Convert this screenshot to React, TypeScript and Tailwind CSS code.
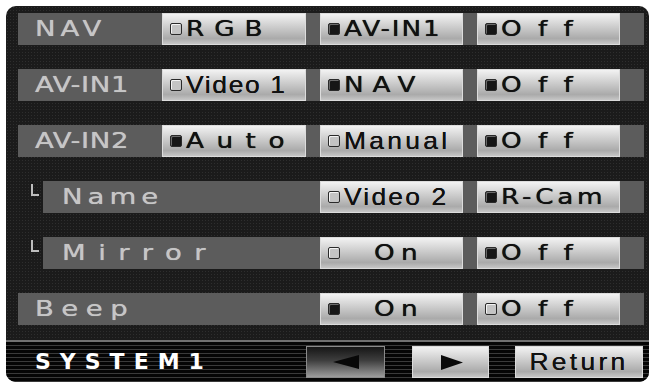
import React from 'react';

type Opt = { label: string; on: boolean; wide?: boolean; track: string; pad?: string };

type Row = {
  label: string;
  sub?: boolean;
  track: string;
  opts: (Opt | null)[];
};

const rows: Row[] = [
  {
    label: 'NAV',
    track: 'tracking-[4px]',
    opts: [
      { label: 'RGB', on: false, wide: true, track: 'tracking-[8px]' },
      { label: 'AV-IN1', on: true, wide: true, track: 'tracking-[1.5px]' },
      { label: 'Off', on: true, wide: true, track: 'tracking-[13px]' },
    ],
  },
  {
    label: 'AV-IN1',
    track: 'tracking-[0.5px]',
    opts: [
      { label: 'Video 1', on: false, track: 'tracking-[1.5px]' },
      { label: 'NAV', on: true, wide: true, track: 'tracking-[7px]' },
      { label: 'Off', on: true, wide: true, track: 'tracking-[13px]' },
    ],
  },
  {
    label: 'AV-IN2',
    track: 'tracking-[0.5px]',
    opts: [
      { label: 'Auto', on: true, wide: true, track: 'tracking-[10px]' },
      { label: 'Manual', on: false, track: 'tracking-[3px]' },
      { label: 'Off', on: true, wide: true, track: 'tracking-[13px]' },
    ],
  },
  {
    label: 'Name',
    sub: true,
    track: 'tracking-[4px]',
    opts: [
      null,
      { label: 'Video 2', on: false, track: 'tracking-[2px]' },
      { label: 'R-Cam', on: true, wide: true, track: 'tracking-[3px]' },
    ],
  },
  {
    label: 'Mirror',
    sub: true,
    track: 'tracking-[10px]',
    opts: [
      null,
      { label: 'On', on: false, wide: true, track: 'tracking-[5px]', pad: 'ml-[34px]' },
      { label: 'Off', on: true, wide: true, track: 'tracking-[13px]' },
    ],
  },
  {
    label: 'Beep',
    track: 'tracking-[6px]',
    opts: [
      null,
      { label: 'On', on: true, wide: true, track: 'tracking-[5px]', pad: 'ml-[34px]' },
      { label: 'Off', on: false, wide: true, track: 'tracking-[13px]' },
    ],
  },
];

const btnBg =
  'border border-[#dcdcdc] bg-[linear-gradient(to_bottom,#f2f2f2_0%,#d8d8d8_30%,#aaaaaa_82%,#c6c6c6_100%)]';

const Square = ({ on }: { on: boolean }) => (
  <span
    className={`w-[12px] h-[12px] shrink-0 border border-[#2a2a2a] rounded-[2px] ${
      on ? 'bg-[#161616] shadow-[inset_1px_1px_0_#6a6a6a]' : 'bg-[#c4c4c4] shadow-[inset_1px_1px_0_#f4f4f4]'
    }`}
  />
);

const OptButton = ({ opt, w }: { opt: Opt; w: string }) => (
  <div className={`${w} h-[32px] flex items-center pl-[7px] ${btnBg} text-[#111] overflow-hidden`}>
    <Square on={opt.on} />
    <span
      className={`${opt.pad ?? 'ml-[4px]'} inline-block origin-left leading-none whitespace-nowrap [text-shadow:0_0_0.6px_#000] ${opt.track} ${
        opt.wide
          ? "font-['DejaVu_Sans'] text-[21px] scale-x-[1.25]"
          : "font-['Liberation_Sans'] text-[24px] scale-x-[1.1]"
      }`}
    >
      {opt.label}
    </span>
  </div>
);

export default function App() {
  return (
    <div className="w-[654px] h-[387px] bg-white pt-[6px] pl-[6px]">
      <div className="w-[643px] h-[376px] rounded-[10px] bg-[#1b1b1b] bg-[radial-gradient(#2e2e2e_0.6px,transparent_0.8px)] bg-[length:3px_3px] flex flex-col">
        <div className="flex flex-col gap-[24px] pt-[7px] pl-[12px]">
          {rows.map((r) => (
            <div key={r.label} className="flex h-[32px] w-[626px]">
              {r.sub ? (
                <div className="w-[25px] h-full pt-[3px] pl-[13px]">
                  <div className="w-[8px] h-[12px] border-l-2 border-b-2 border-[#bdbdbd]" />
                </div>
              ) : null}
              <div
                className={`${
                  r.opts[0] ? 'w-[144px]' : r.sub ? 'w-[277px]' : 'w-[302px]'
                } h-full bg-[#5c5c5c] flex items-center pl-[17px] text-[#c6c6c6] font-['DejaVu_Sans'] text-[22px] leading-none overflow-hidden`}
              >
                <span className={`inline-block origin-left whitespace-nowrap scale-x-[1.25] [text-shadow:0_0_0.6px_#c6c6c6] ${r.sub ? 'ml-[2px]' : ''} ${r.track}`}>
                  {r.label}
                </span>
              </div>
              {r.opts[0] ? <OptButton opt={r.opts[0]} w="w-[144px]" /> : null}
              {r.opts[0] ? <div className="w-[14px] h-full bg-[#5c5c5c]" /> : null}
              <OptButton opt={r.opts[1] as Opt} w="w-[143px]" />
              <div className="w-[14px] h-full bg-[#5c5c5c]" />
              <OptButton opt={r.opts[2] as Opt} w="w-[143px]" />
              <div className="flex-1 h-full bg-[#5c5c5c]" />
            </div>
          ))}
        </div>
        <div className="mt-[15px] h-[2px] bg-[#707070]" />
        <div className="flex-1 rounded-b-[10px] bg-[repeating-linear-gradient(to_bottom,#050505_0px,#050505_3px,#3a3a3a_3px,#3a3a3a_4px)] flex items-center">
          <div className="w-[300px] pl-[29px] text-white font-['DejaVu_Sans'] font-bold text-[22px] tracking-[9px] leading-none">
            SYSTEM1
          </div>
          <div className="w-[79px] h-[32px] border border-[#8a8a8a] bg-[linear-gradient(to_bottom,#161616_0%,#3e3e3e_45%,#9c9c9c_100%)] flex items-center justify-center">
            <svg width="26" height="14" viewBox="0 0 26 14">
              <polygon points="0,7 26,0 26,14" fill="#080808" />
            </svg>
          </div>
          <div className="w-[27px]" />
          <div className={`w-[77px] h-[32px] ${btnBg} flex items-center justify-center`}>
            <svg width="22" height="15" viewBox="0 0 22 15" className="ml-[3px]">
              <polygon points="0,0 22,7.5 0,15" fill="#0a0a0a" />
            </svg>
          </div>
          <div className="w-[26px]" />
          <div className={`w-[128px] h-[32px] ${btnBg} flex items-center justify-center`}>
            <span className="inline-block scale-x-[1.1] font-['Liberation_Sans'] text-[24px] tracking-[3px] text-[#111] leading-none [text-shadow:0_0_0.6px_#000]">
              Return
            </span>
          </div>
        </div>
      </div>
    </div>
  );
}
